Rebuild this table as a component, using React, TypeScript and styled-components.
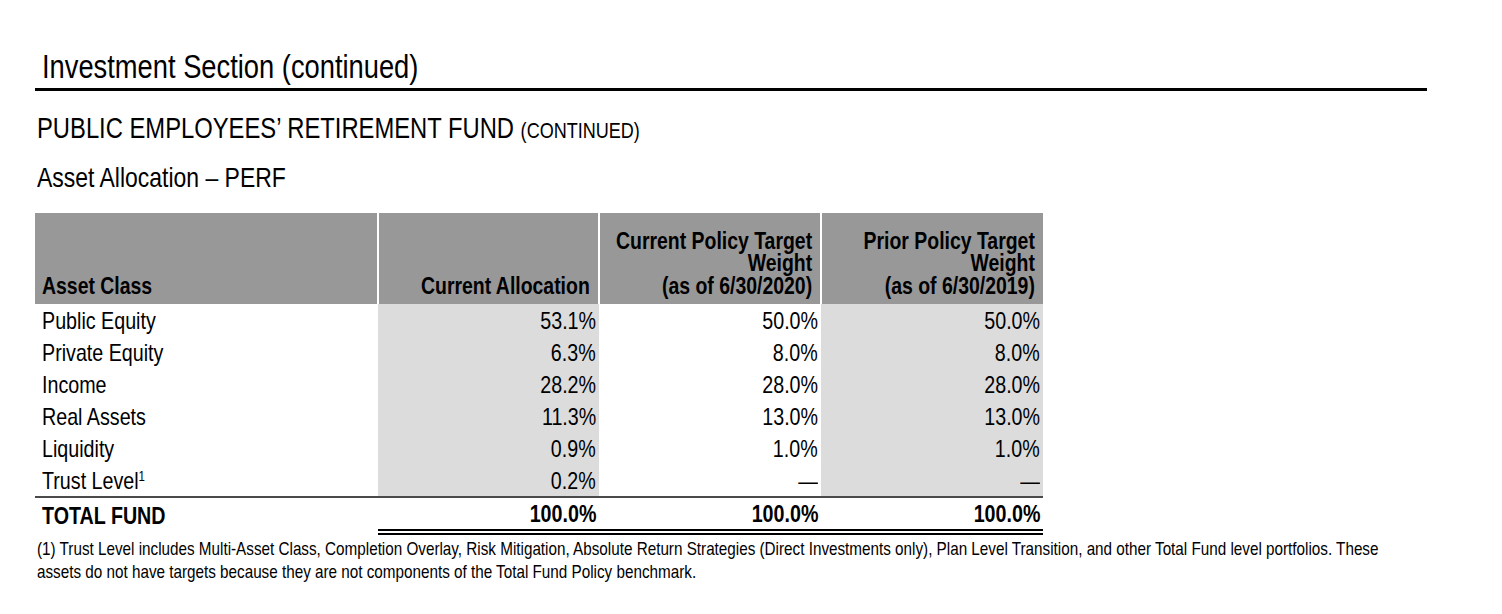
import React from "react";
import styled, { createGlobalStyle } from "styled-components";

const GlobalStyle = createGlobalStyle`
  html, body { margin: 0; padding: 0; background: #ffffff; overflow: hidden; }
  body { font-family: "Liberation Sans", Arial, sans-serif; color: #000; }
`;

/* Arial Narrow is not installed: the condensed face is drawn by compressing Liberation Sans (Arial metrics). */
const Narrow = styled.span<{ $origin?: "left" | "right" }>`
  display: inline-block;
  white-space: nowrap;
  transform: scaleX(0.82);
  transform-origin: ${(p) => p.$origin ?? "left"} center;
`;

const Fit = styled.div<{ $align?: "left" | "right" }>`
  display: flex;
  justify-content: ${(p) => (p.$align === "left" ? "flex-start" : "flex-end")};
  text-align: ${(p) => p.$align ?? "right"};
`;

const Page = styled.div`
  width: 1392px;
  padding: 47px 0 0 35px;
`;

const SectionTitle = styled.h1`
  margin: 0;
  padding: 0 0 1px 7px;
  font-size: 33.3px;
  line-height: 40px;
  font-weight: 400;
  border-bottom: 3px solid #000;
`;

const FundTitle = styled.h2`
  margin: 0;
  padding: 20px 0 0 2px;
  font-size: 29px;
  line-height: 34px;
  font-weight: 400;
`;

const Small = styled.span`
  font-size: 22px;
`;

const TableTitle = styled.h3`
  margin: 0;
  padding: 13px 0 0 2px;
  font-size: 28px;
  line-height: 34px;
  font-weight: 400;
`;

const Table = styled.table`
  margin-top: 18px;
  border-collapse: collapse;
  table-layout: fixed;
  width: 1008px;
`;

const HeadCell = styled.th<{ $first?: boolean }>`
  height: 84px;
  padding: 0 ${(p) => (p.$first ? "0" : "8px")} 7px ${(p) => (p.$first ? "7px" : "0")};
  background: #989898;
  border-left: ${(p) => (p.$first ? "none" : "2px solid #ffffff")};
  vertical-align: bottom;
  font-size: 23.7px;
  line-height: 22.5px;
  font-weight: 700;
`;

const BodyCell = styled.td<{ $shade?: boolean; $label?: boolean }>`
  height: 30px;
  padding: 2px ${(p) => (p.$label ? "0" : "3px")} 0 ${(p) => (p.$label ? "7px" : "0")};
  background: ${(p) => (p.$shade ? "#dcdcdc" : "#ffffff")};
  font-size: 24px;
  line-height: 30px;
`;

const LastRow = styled.tr`
  border-bottom: 2px solid #4a4a4a;
`;

const TotalCell = styled.td<{ $label?: boolean }>`
  height: 31px;
  padding: 0 ${(p) => (p.$label ? "0" : "3px")} 0 ${(p) => (p.$label ? "7px" : "0")};
  font-size: 24px;
  font-weight: 700;
  line-height: 31px;
  border-bottom: ${(p) => (p.$label ? "none" : "6px double #000")};
`;

const Sup = styled.sup`
  font-size: 14px;
  vertical-align: 8px;
  line-height: 0;
`;

const Footnote = styled.p`
  margin: 2px 0 0 2px;
  font-size: 18.6px;
  line-height: 23px;
  overflow: hidden;
`;

type Row = { label: string; note?: boolean; current: string; target: string; prior: string };

const rows: Row[] = [
  { label: "Public Equity", current: "53.1%", target: "50.0%", prior: "50.0%" },
  { label: "Private Equity", current: "6.3%", target: "8.0%", prior: "8.0%" },
  { label: "Income", current: "28.2%", target: "28.0%", prior: "28.0%" },
  { label: "Real Assets", current: "11.3%", target: "13.0%", prior: "13.0%" },
  { label: "Liquidity", current: "0.9%", target: "1.0%", prior: "1.0%" },
  { label: "Trust Level", note: true, current: "0.2%", target: "—", prior: "—" },
];

function Num({ children }: { children: React.ReactNode }) {
  return (
    <Fit>
      <Narrow $origin="right">{children}</Narrow>
    </Fit>
  );
}

function Label({ children }: { children: React.ReactNode }) {
  return (
    <Fit $align="left">
      <Narrow>{children}</Narrow>
    </Fit>
  );
}

export default function App() {
  return (
    <>
      <GlobalStyle />
      <Page>
        <SectionTitle>
          <Narrow>Investment Section (continued)</Narrow>
        </SectionTitle>
        <FundTitle>
          <Narrow>
            PUBLIC EMPLOYEES’ RETIREMENT FUND <Small>(CONTINUED)</Small>
          </Narrow>
        </FundTitle>
        <TableTitle>
          <Narrow>Asset Allocation – PERF</Narrow>
        </TableTitle>
        <Table>
          <colgroup>
            <col style={{ width: 343 }} />
            <col style={{ width: 221 }} />
            <col style={{ width: 222 }} />
            <col style={{ width: 222 }} />
          </colgroup>
          <thead>
            <tr>
              <HeadCell $first>
                <Label>Asset Class</Label>
              </HeadCell>
              <HeadCell>
                <Num>Current Allocation</Num>
              </HeadCell>
              <HeadCell>
                <Num>
                  Current Policy Target
                  <br />
                  Weight
                  <br />
                  (as of 6/30/2020)
                </Num>
              </HeadCell>
              <HeadCell>
                <Num>
                  Prior Policy Target
                  <br />
                  Weight
                  <br />
                  (as of 6/30/2019)
                </Num>
              </HeadCell>
            </tr>
          </thead>
          <tbody>
            {rows.map((r, i) => {
              const cells = (
                <>
                  <BodyCell $label>
                    <Label>
                      {r.label}
                      {r.note && <Sup>1</Sup>}
                    </Label>
                  </BodyCell>
                  <BodyCell $shade>
                    <Num>{r.current}</Num>
                  </BodyCell>
                  <BodyCell>
                    <Num>{r.target}</Num>
                  </BodyCell>
                  <BodyCell $shade>
                    <Num>{r.prior}</Num>
                  </BodyCell>
                </>
              );
              return i === rows.length - 1 ? <LastRow key={r.label}>{cells}</LastRow> : <tr key={r.label}>{cells}</tr>;
            })}
            <tr>
              <TotalCell $label>
                <Label>TOTAL FUND</Label>
              </TotalCell>
              <TotalCell>
                <Num>100.0%</Num>
              </TotalCell>
              <TotalCell>
                <Num>100.0%</Num>
              </TotalCell>
              <TotalCell>
                <Num>100.0%</Num>
              </TotalCell>
            </tr>
          </tbody>
        </Table>
        <Footnote>
          <Narrow>
            (1) Trust Level includes Multi-Asset Class, Completion Overlay, Risk Mitigation, Absolute Return Strategies (Direct Investments only), Plan Level Transition, and other Total Fund level portfolios. These
            <br />
            assets do not have targets because they are not components of the Total Fund Policy benchmark.
          </Narrow>
        </Footnote>
      </Page>
    </>
  );
}
